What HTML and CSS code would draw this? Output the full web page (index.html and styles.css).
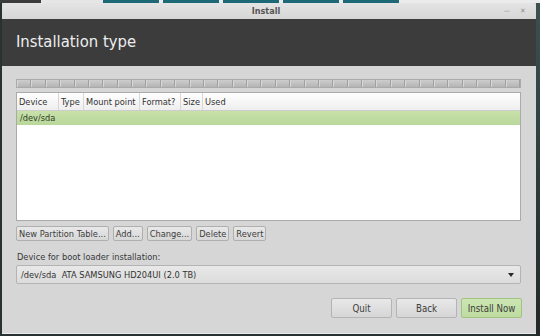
FILE: index.html
```html
<!DOCTYPE html>
<html lang="en">
<head>
    <meta charset="UTF-8">
    <meta name="viewport" content="width=device-width, initial-scale=1.0">
    <title>Install</title>
    <link rel="stylesheet" href="styles.css">
</head>
<body>
    <div class="desktop-top">
        <span class="desk-text"></span>
        <span class="task task-1"></span>
        <span class="task task-2"></span>
        <span class="task task-3"></span>
        <span class="task task-4"></span>
        <span class="task task-5"></span>
        <span class="desk-gap"></span>
    </div>

    <div class="screen">
        <div class="window">
            <div class="titlebar">
                <span class="title">Install</span>
                <span class="win-btn">&#8212;</span>
                <span class="win-btn close">&#10005;</span>
            </div>

            <div class="header">
                <p class="header-title">Installation type</p>
            </div>

            <div class="content">
                <div class="partition-bar">
                    <span></span><span></span><span></span><span></span><span></span><span></span>
                    <span></span><span></span><span></span><span></span><span></span><span></span>
                    <span></span><span></span><span></span><span></span><span></span><span></span>
                    <span></span><span></span><span></span><span></span><span></span><span></span>
                    <span></span><span></span><span></span><span></span><span></span><span></span>
                    <span></span><span></span><span></span><span></span><span></span>
                </div>

                <div class="table">
                    <div class="table-head">
                        <span class="col col-device">Device</span>
                        <span class="col col-type">Type</span>
                        <span class="col col-mount">Mount point</span>
                        <span class="col col-format">Format?</span>
                        <span class="col col-size">Size</span>
                        <span class="col col-used">Used</span>
                    </div>
                    <div class="table-row selected">/dev/sda</div>
                </div>

                <div class="table-buttons">
                    <button class="small-button">New Partition Table...</button>
                    <button class="small-button">Add...</button>
                    <button class="small-button">Change...</button>
                    <button class="small-button">Delete</button>
                    <button class="small-button">Revert</button>
                </div>

                <p class="label">Device for boot loader installation:</p>
                <div class="combo">
                    <span>/dev/sda&nbsp; ATA SAMSUNG HD204UI (2.0 TB)</span>
                    <span class="combo-arrow"></span>
                </div>

                <div class="footer">
                    <button class="big-button">Quit</button>
                    <button class="big-button">Back</button>
                    <button class="big-button primary">Install Now</button>
                </div>
            </div>
        </div>
        <div class="side-strip"></div>
    </div>
</body>
</html>
```

FILE: styles.css
```css
body{
    margin: 0;
    width: 540px;
    height: 336px;
    overflow: hidden;
    background-color: rgb(40, 50, 50);
    font-family: "DejaVu Sans Condensed", "DejaVu Sans", sans-serif;
    color: rgb(50, 50, 50);
}

.desktop-top{
    display: flex;
    height: 3px;
    background-color: rgb(235, 235, 235);
}
.desk-text{
    width: 103px;
    background: linear-gradient(90deg, rgb(60, 60, 60) 40%, rgb(230, 230, 230) 40%);
}
.task{
    width: 56px;
    margin-right: 4px;
    background-color: rgb(30, 105, 120);
}
.desk-gap{
    flex: 1;
}

.screen{
    display: flex;
    height: 333px;
}
.window{
    display: flex;
    flex-direction: column;
    width: 534px;
    height: 330px;
    margin-left: 2px;
    background-color: rgb(214, 214, 214);
    border-bottom: 1px solid rgb(235, 235, 235);
}
.side-strip{
    flex: 1;
    background: linear-gradient(rgb(60, 80, 80), rgb(35, 40, 40));
}

.titlebar{
    display: flex;
    align-items: center;
    height: 16px;
    padding-right: 6px;
    background: linear-gradient(rgb(228, 228, 228), rgb(214, 214, 214));
    border-radius: 4px 4px 0 0;
}
.title{
    flex: 1;
    text-align: center;
    padding-left: 30px;
    font-size: 9px;
    font-weight: bold;
    color: rgb(85, 85, 85);
}
.win-btn{
    width: 14px;
    text-align: center;
    font-size: 7px;
    color: rgb(140, 140, 140);
}
.close{
    margin-left: 2px;
}

.header{
    display: flex;
    align-items: center;
    height: 47px;
    background-color: rgb(60, 60, 60);
}
.header-title{
    margin: 0 0 2px 14px;
    font-size: 16.5px;
    color: rgb(238, 238, 238);
}

.content{
    display: flex;
    flex-direction: column;
    flex: 1;
    padding: 13px 15px 0 14px;
    font-size: 9.2px;
}

.partition-bar{
    display: flex;
    height: 7px;
    border: 1px solid rgb(170, 170, 170);
    background: linear-gradient(rgb(205, 205, 205), rgb(180, 180, 180));
}
.partition-bar span{
    flex: 1;
    border-right: 1px solid rgb(160, 160, 160);
    border-left: 1px solid rgb(215, 215, 215);
}

.table{
    height: 127px;
    margin-top: 4px;
    border: 1px solid rgb(170, 170, 170);
    background-color: white;
}
.table-head{
    display: flex;
    height: 17px;
    align-items: center;
    background: linear-gradient(rgb(255, 255, 255), rgb(238, 238, 238));
    border-bottom: 1px solid rgb(205, 205, 205);
}
.col{
    height: 100%;
    display: flex;
    align-items: center;
    padding-left: 2px;
    border-right: 1px solid rgb(215, 215, 215);
}
.col-device{
    width: 39px;
}
.col-type{
    width: 22px;
}
.col-mount{
    width: 53px;
}
.col-format{
    width: 38px;
}
.col-size{
    width: 19px;
}
.col-used{
    border-right: none;
}
.table-row{
    height: 14px;
    line-height: 14px;
    padding-left: 3px;
}
.selected{
    background: linear-gradient(rgb(200, 225, 170), rgb(185, 215, 155));
    color: rgb(45, 60, 35);
}

.table-buttons{
    display: flex;
    gap: 4px;
    margin-top: 5px;
}
.small-button{
    height: 15px;
    padding: 0 2px;
    font-family: inherit;
    font-size: 9.2px;
    color: rgb(60, 60, 60);
    background: linear-gradient(rgb(232, 232, 232), rgb(215, 215, 215));
    border: 1px solid rgb(175, 175, 175);
    border-radius: 2px;
}

.label{
    margin: 10px 0 0 1px;
    line-height: 11px;
    color: rgb(55, 55, 55);
}
.combo{
    display: flex;
    align-items: center;
    justify-content: space-between;
    height: 17px;
    margin-top: 3px;
    padding: 0 6px 0 4px;
    background: linear-gradient(rgb(232, 232, 232), rgb(220, 220, 220));
    border: 1px solid rgb(180, 180, 180);
    border-radius: 2px;
}
.combo-arrow{
    width: 0;
    height: 0;
    border-left: 3px solid transparent;
    border-right: 3px solid transparent;
    border-top: 4px solid rgb(40, 40, 40);
}

.footer{
    display: flex;
    justify-content: flex-end;
    gap: 4px;
    margin-top: 14px;
    margin-right: -1px;
}
.big-button{
    width: 61px;
    height: 20px;
    padding: 0;
    white-space: nowrap;
    font-family: inherit;
    font-size: 9.6px;
    color: rgb(60, 60, 60);
    background: linear-gradient(rgb(232, 232, 232), rgb(214, 214, 214));
    border: 1px solid rgb(180, 180, 180);
    border-radius: 2px;
}
.primary{
    background: linear-gradient(rgb(205, 230, 180), rgb(190, 220, 160));
    border-color: rgb(160, 195, 130);
}
```
